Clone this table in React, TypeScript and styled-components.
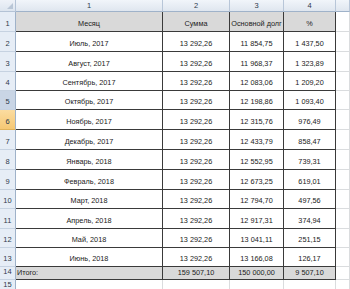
import React from "react";
import styled, { createGlobalStyle, css } from "styled-components";

const GlobalStyle = createGlobalStyle`
  html, body { margin: 0; padding: 0; background: #ffffff; }
  body { width: 350px; height: 289px; overflow: hidden; font-family: "Liberation Sans", Arial, sans-serif; }
`;

const ROW_HEIGHTS = [20, 20, 20, 19, 19, 20, 20, 20, 20, 19, 20, 19, 19, 13];

const Sheet = styled.div`
  display: grid;
  grid-template-columns: 16px 147px 67px 54px 52px 1fr;
  grid-template-rows: 12px ${ROW_HEIGHTS.map((h) => `${h}px`).join(" ")} 1fr;
  width: 350px;
  height: 289px;
  overflow: hidden;
  font-size: 7.3px;
  color: #222222;
`;

const Corner = styled.div`
  position: relative;
  background: linear-gradient(#eef2f8, #dde5ef);
  border-right: 1px solid #b4c3d6;
  border-bottom: 1px solid #b4c3d6;
  box-sizing: border-box;
`;

const CornerMark = styled.svg`
  position: absolute;
  right: 2px;
  bottom: 2px;
`;

const ColHead = styled.div`
  display: flex;
  align-items: center;
  justify-content: center;
  background: linear-gradient(#f1f5fa, #dfe6ef);
  border-right: 1px solid #b8c6d8;
  border-bottom: 1px solid #9fb2c9;
  box-sizing: border-box;
  color: #2f3b4c;
  font-size: 7.5px;
  line-height: 10px;
`;

type RowState = "normal" | "hover" | "active";

const RowHead = styled.div<{ $state: RowState }>`
  display: flex;
  align-items: flex-end;
  justify-content: center;
  padding-bottom: 2px;
  box-sizing: border-box;
  background: #e6edf6;
  border-right: 1px solid #9fb2c9;
  border-bottom: 1px solid #c6d2e1;
  color: #2f3b4c;
  font-size: 7.5px;
  line-height: 10px;
  ${({ $state }) =>
    $state === "hover" &&
    css`
      background: #c9d5e5;
    `}
  ${({ $state }) =>
    $state === "active" &&
    css`
      background: linear-gradient(#fbdca0, #f6c874);
      border-bottom-color: #e0b35c;
    `}
`;

type CellKind = "head" | "data" | "total" | "empty";

const Cell = styled.div<{ $kind: CellKind; $align?: "left" | "center" }>`
  display: flex;
  align-items: flex-end;
  justify-content: ${({ $align }) => ($align === "left" ? "flex-start" : "center")};
  padding: 0 0 2px ${({ $align }) => ($align === "left" ? "1px" : "0")};
  box-sizing: border-box;
  white-space: nowrap;
  overflow: hidden;
  line-height: 10px;
  border-right: 1px solid #3a3a3a;
  border-bottom: 1px solid #3a3a3a;
  background: #ffffff;
  ${({ $kind }) =>
    ($kind === "head" || $kind === "total") &&
    css`
      background: #d9d9d9;
    `}
  ${({ $kind }) =>
    $kind === "total" &&
    css`
      padding-bottom: 1px;
    `}
  ${({ $kind }) =>
    $kind === "empty" &&
    css`
      border-right-color: #dadcde;
      border-bottom-color: #dadcde;
    `}
`;

const rows: [string, string, string, string][] = [
  ["Июль, 2017", "13 292,26", "11 854,75", "1 437,50"],
  ["Август, 2017", "13 292,26", "11 968,37", "1 323,89"],
  ["Сентябрь, 2017", "13 292,26", "12 083,06", "1 209,20"],
  ["Октябрь, 2017", "13 292,26", "12 198,86", "1 093,40"],
  ["Ноябрь, 2017", "13 292,26", "12 315,76", "976,49"],
  ["Декабрь, 2017", "13 292,26", "12 433,79", "858,47"],
  ["Январь, 2018", "13 292,26", "12 552,95", "739,31"],
  ["Февраль, 2018", "13 292,26", "12 673,25", "619,01"],
  ["Март, 2018", "13 292,26", "12 794,70", "497,56"],
  ["Апрель, 2018", "13 292,26", "12 917,31", "374,94"],
  ["Май, 2018", "13 292,26", "13 041,11", "251,15"],
  ["Июнь, 2018", "13 292,26", "13 166,08", "126,17"],
];

const rowState = (n: number): RowState => (n === 5 ? "hover" : n === 6 ? "active" : "normal");

export default function App() {
  return (
    <>
      <GlobalStyle />
      <Sheet>
        <Corner>
          <CornerMark width="6" height="6" viewBox="0 0 6 6">
            <polygon points="6,0 6,6 0,6" fill="#b9c6d6" />
          </CornerMark>
        </Corner>
        <ColHead>1</ColHead>
        <ColHead>2</ColHead>
        <ColHead>3</ColHead>
        <ColHead>4</ColHead>
        <ColHead />

        <RowHead $state="normal">1</RowHead>
        <Cell $kind="head">Месяц</Cell>
        <Cell $kind="head">Сумма</Cell>
        <Cell $kind="head">Основной долг</Cell>
        <Cell $kind="head">%</Cell>
        <Cell $kind="empty" />

        {rows.map((r, i) => {
          const n = i + 2;
          return (
            <React.Fragment key={n}>
              <RowHead $state={rowState(n)}>{n}</RowHead>
              <Cell $kind="data">{r[0]}</Cell>
              <Cell $kind="data">{r[1]}</Cell>
              <Cell $kind="data">{r[2]}</Cell>
              <Cell $kind="data">{r[3]}</Cell>
              <Cell $kind="empty" />
            </React.Fragment>
          );
        })}

        <RowHead $state="normal">14</RowHead>
        <Cell $kind="total" $align="left">Итого:</Cell>
        <Cell $kind="total">159 507,10</Cell>
        <Cell $kind="total">150 000,00</Cell>
        <Cell $kind="total">9 507,10</Cell>
        <Cell $kind="empty" />

        <RowHead $state="normal">15</RowHead>
        <Cell $kind="empty" />
        <Cell $kind="empty" />
        <Cell $kind="empty" />
        <Cell $kind="empty" />
        <Cell $kind="empty" />
      </Sheet>
    </>
  );
}
